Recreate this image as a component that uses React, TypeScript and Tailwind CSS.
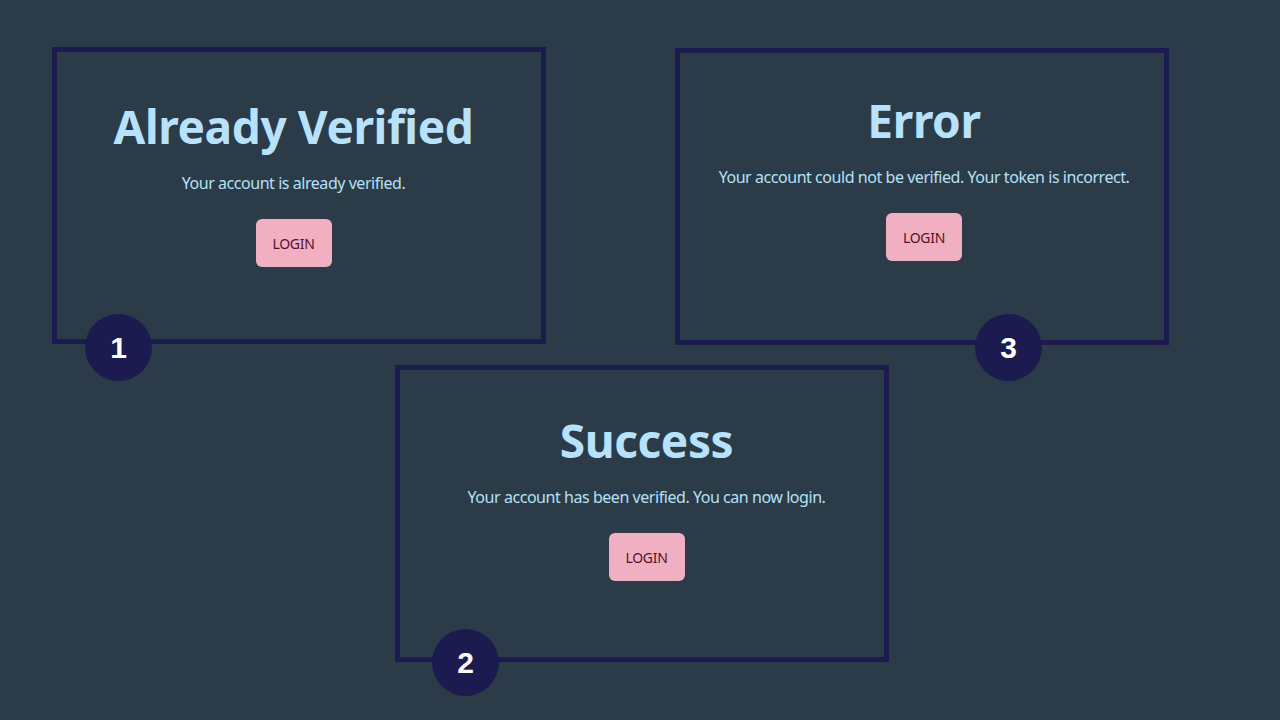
import React from "react";

const font = { fontFamily: '"Segoe UI", "Noto Sans", "Open Sans", sans-serif' };

function Card({
  title,
  text,
  num,
  pad,
  badgeLeft,
  badgeTop,
}: {
  title: string;
  text: string;
  num: string;
  pad: string;
  badgeLeft: string;
  badgeTop: string;
}) {
  return (
    <div
      className={`relative w-[494px] h-[297px] border-[5px] border-[#1b1b50] flex flex-col items-center ${pad}`}
    >
      <h1 className="text-[46px] leading-[48px] font-bold tracking-[-0.4px] text-[#b8e2fb]">{title}</h1>
      <p className="mt-[21px] text-[16px] leading-[24px] tracking-[-0.45px] text-[#b5e0f6]">{text}</p>
      <button className="mt-[24px] w-[76px] h-[48px] rounded-[6px] bg-[#f0b0c1] text-[14px] tracking-[-0.3px] text-[#55102c]">
        LOGIN
      </button>
      <div
        className={`absolute ${badgeLeft} ${badgeTop} w-[67px] h-[67px] rounded-full bg-[#1b1b50] flex items-center justify-center text-white text-[30px] font-bold`}
        style={{ fontFamily: '"Liberation Sans", Arial, sans-serif' }}
      >
        {num}
      </div>
    </div>
  );
}

export default function App() {
  return (
    <div className="w-[1280px] h-[720px] bg-[#2b3c48] overflow-hidden" style={font}>
      <div className="flex pl-[52px] pt-[47px] gap-[129px]">
        <Card
          title="Already Verified"
          text="Your account is already verified."
          num="1"
          pad="pt-[50px] pr-[11px]"
          badgeLeft="left-[28px]"
          badgeTop="top-[262px]"
        />
        <div className="mt-[1px]">
          <Card
            title="Error"
            text="Your account could not be verified. Your token is incorrect."
            num="3"
            pad="pt-[43px] pl-[4px]"
            badgeLeft="left-[295px]"
            badgeTop="top-[261px]"
          />
        </div>
      </div>
      <div className="pl-[395px] mt-[20px]">
        <Card
          title="Success"
          text="Your account has been verified. You can now login."
          num="2"
          pad="pt-[46px] pl-[9px]"
          badgeLeft="left-[32px]"
          badgeTop="top-[259px]"
        />
      </div>
    </div>
  );
}
